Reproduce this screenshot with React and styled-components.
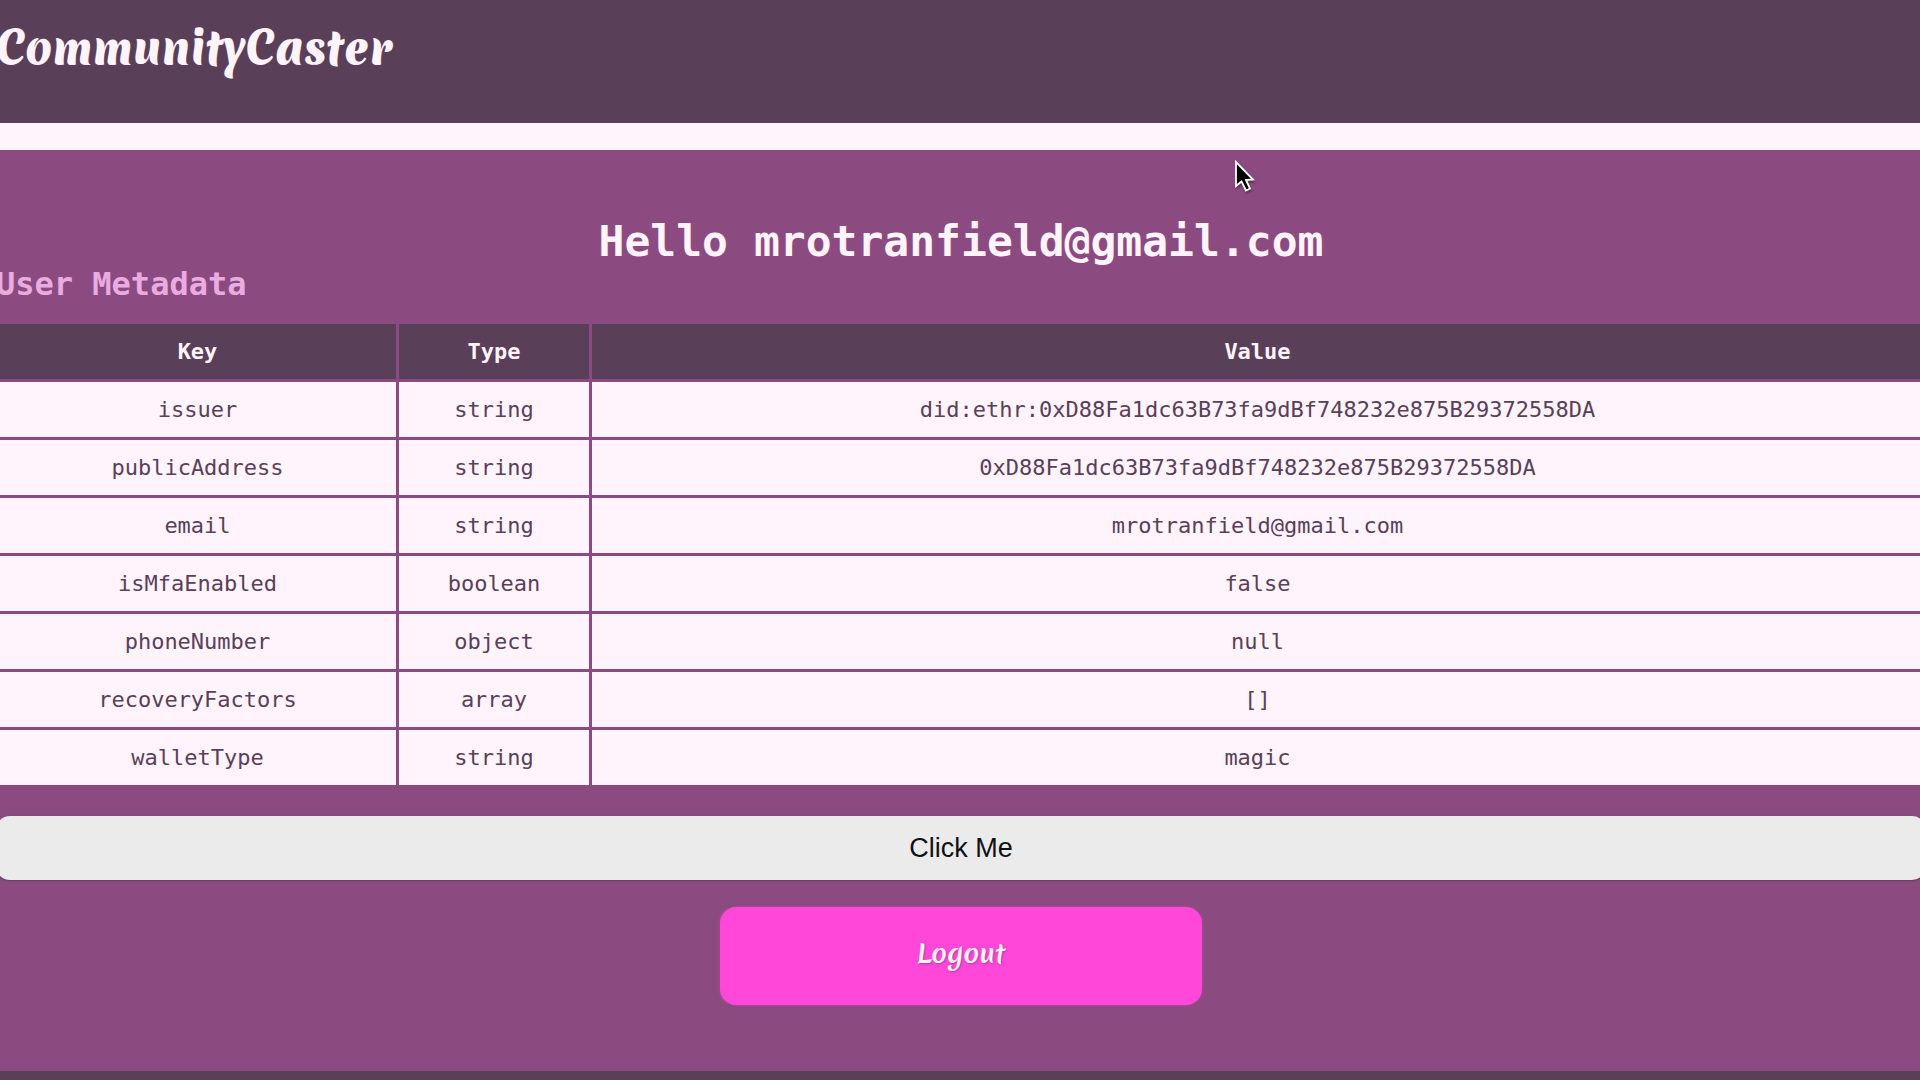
import React from "react";
import styled, { createGlobalStyle } from "styled-components";

const color = {
  plum: "#5a3f59",
  mauve: "#8c4b80",
  blush: "#fff3fc",
  orchid: "#e9ace0",
  pink: "#ff47da",
  grey: "#ebebeb",
};

const mono = `Menlo, "DejaVu Sans Mono", monospace`;
const script = `Merienda, Lato, cursive`;

const GlobalStyle = createGlobalStyle`
  *, *::before, *::after { box-sizing: border-box; }
  body {
    margin: 0;
    background: ${color.blush};
    font-family: ${mono};
    overflow: hidden;
  }
`;

const Page = styled.div`
  display: flex;
  flex-direction: column;
  min-height: 100vh;
  margin: 0 -6px 0 -4px;
`;

const Header = styled.header`
  padding: 14px 0 41px;
  background: ${color.plum};
`;

const Logo = styled.h1`
  margin: 0;
  font: 900 43px/68px ${script};
  color: ${color.blush};
`;

const Main = styled.main`
  display: flex;
  flex-direction: column;
  margin-top: 27px;
  padding: 66px 0;
  background: ${color.mauve};
`;

const Greeting = styled.h2`
  margin: 0;
  font-size: 43px;
  line-height: 50px;
  text-align: center;
  color: ${color.blush};
`;

const SectionTitle = styled.h3`
  margin: 0 0 19px;
  font-size: 32px;
  line-height: 36px;
  color: ${color.orchid};
`;

const Table = styled.table`
  width: 100%;
  table-layout: fixed;
  border-spacing: 3px;
  font-size: 22px;
  line-height: 27px;
  text-align: center;
`;

const HeadCell = styled.th`
  width: ${(p) => p.$width || "auto"};
  padding: 14px;
  background: ${color.plum};
  color: ${color.blush};
`;

const Cell = styled.td`
  padding: 14px;
  background: ${color.blush};
  color: ${color.plum};
`;

const Actions = styled.div`
  display: flex;
  flex-direction: column;
  align-items: center;
  gap: 27px;
  margin-top: 28px;
`;

const ClickButton = styled.button`
  width: 100%;
  padding: 16px;
  border: 0;
  border-radius: 14px;
  background: ${color.grey};
  box-shadow: 0 1px 2px rgba(60, 60, 60, 0.6);
  font: 27px/32px Arial, "Liberation Sans", sans-serif;
  color: #111;
`;

const LogoutButton = styled.button`
  width: 25%;
  padding: 26px 16px 32px;
  border: 0;
  border-radius: 16px;
  background: ${color.pink};
  box-shadow: 0 0 3px rgba(200, 80, 180, 0.6);
  font: 700 26px/40px ${script};
  color: ${color.blush};
  text-shadow: 1px 1px 2px rgba(90, 63, 89, 0.5);
`;

const Footer = styled.footer`
  flex: 1;
  background: ${color.plum};
`;

const Pointer = styled.svg`
  position: absolute;
  left: 1232px;
  top: 158px;
  pointer-events: none;
  filter: drop-shadow(1px 2px 1px rgba(0, 0, 0, 0.35));
`;

const rows = [
  ["issuer", "string", "did:ethr:0xD88Fa1dc63B73fa9dBf748232e875B29372558DA"],
  ["publicAddress", "string", "0xD88Fa1dc63B73fa9dBf748232e875B29372558DA"],
  ["email", "string", "mrotranfield@gmail.com"],
  ["isMfaEnabled", "boolean", "false"],
  ["phoneNumber", "object", "null"],
  ["recoveryFactors", "array", "[]"],
  ["walletType", "string", "magic"],
];

export default function App() {
  return (
    <>
      <GlobalStyle />
      <Page>
        <Header>
          <Logo>CommunityCaster</Logo>
        </Header>
        <Main>
          <Greeting>Hello mrotranfield@gmail.com</Greeting>
          <SectionTitle id="metadata">User Metadata</SectionTitle>
          <Table aria-labelledby="metadata">
            <thead>
              <tr>
                <HeadCell scope="col" $width="397px">Key</HeadCell>
                <HeadCell scope="col" $width="190px">Type</HeadCell>
                <HeadCell scope="col">Value</HeadCell>
              </tr>
            </thead>
            <tbody>
              {rows.map(([key, type, value]) => (
                <tr key={key}>
                  <Cell>{key}</Cell>
                  <Cell>{type}</Cell>
                  <Cell>{value}</Cell>
                </tr>
              ))}
            </tbody>
          </Table>
          <Actions>
            <ClickButton type="button">Click Me</ClickButton>
            <LogoutButton type="button">Logout</LogoutButton>
          </Actions>
        </Main>
        <Footer />
      </Page>
      <Pointer width="24" height="36" viewBox="0 0 24 36" aria-hidden="true">
        <path
          d="M4 4 L4 28 L9.5 23.5 L14 32.5 L18 30.5 L14 22 L21 21.5 Z"
          fill="#000"
          stroke="#fff"
          strokeWidth="1.8"
        />
      </Pointer>
    </>
  );
}
